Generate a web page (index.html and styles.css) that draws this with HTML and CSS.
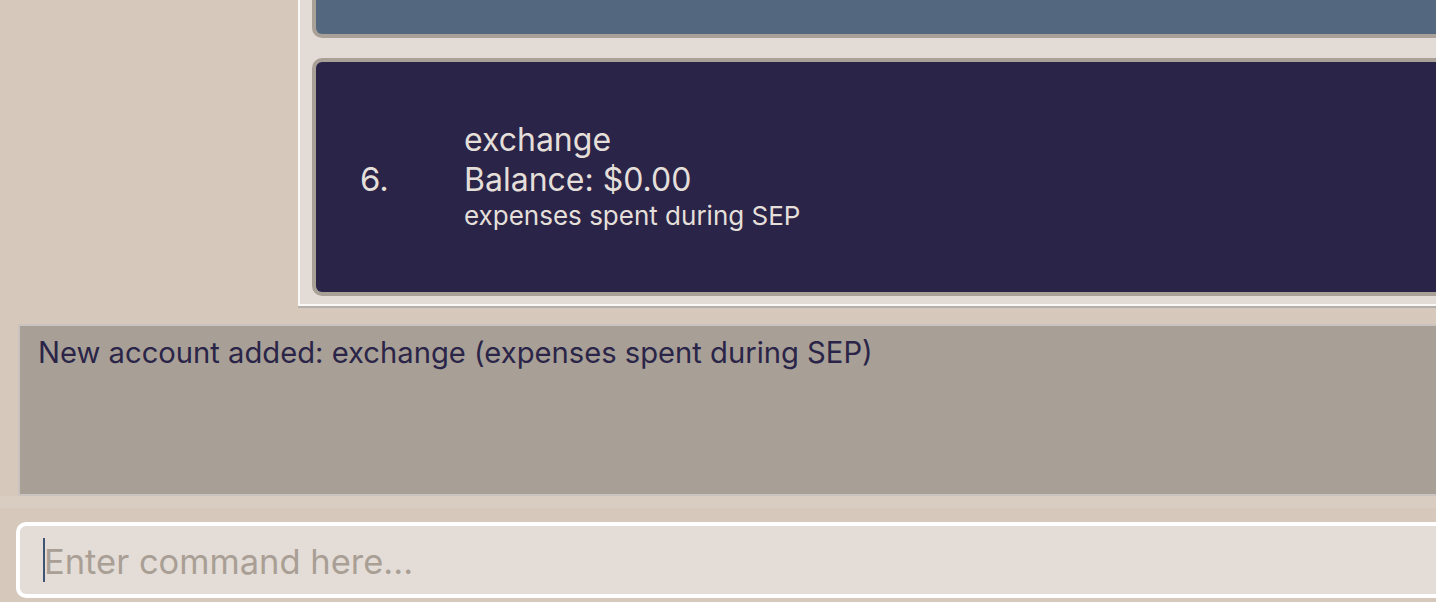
FILE: index.html
```html
<!DOCTYPE html>
<html>
<head>
<meta charset="utf-8">
<link rel="stylesheet" href="styles.css">
</head>
<body>
<div class="app">
  <div class="top-row">
    <div class="sidebar"></div>
    <div class="list-panel">
      <div class="card card-prev"></div>
      <div class="card card-current">
        <div class="card-index">6.</div>
        <div class="card-body">
          <div class="card-name">exchange</div>
          <div class="card-balance">Balance: $0.00</div>
          <div class="card-desc">expenses spent during SEP</div>
        </div>
      </div>
    </div>
  </div>
  <div class="result-section">
    <div class="result-box">New account added: exchange (expenses spent during SEP)</div>
  </div>
  <div class="command-section">
    <div class="command-box">
      <span class="caret"></span>
      <span class="placeholder">Enter command here...</span>
    </div>
  </div>
</div>
</body>
</html>
```

FILE: styles.css
```css
html, body {
  margin: 0;
  padding: 0;
  height: 602px;
  overflow: hidden;
  background: #d6c9bc;
  font-family: Inter, "Noto Sans", sans-serif;
}

.app {
  display: flex;
  flex-direction: column;
  width: 1480px;
  height: 602px;
}

.top-row {
  display: flex;
  align-items: flex-end;
  height: 308px;
  overflow: hidden;
  flex: none;
}

.sidebar {
  width: 298px;
  flex: none;
  align-self: stretch;
}

.list-panel {
  flex: 1;
  display: flex;
  flex-direction: column;
  justify-content: flex-end;
  gap: 20px;
  background: #e3dcd6;
  border-left: 2px solid #fbf9f7;
  border-bottom: 2px solid #fbf9f7;
  box-shadow: 0 2px 0 #b4afab;
  margin-bottom: 2px;
  padding: 0 0 8px 12px;
  height: 500px;
}

.card {
  border: 4px solid #a9a097;
  border-radius: 10px;
  border-right: none;
  border-top-right-radius: 0;
  border-bottom-right-radius: 0;
  flex: none;
}

.card-prev {
  height: 100px;
  background: #53677f;
}

.card-current {
  height: 230px;
  background: #2a2548;
  display: flex;
  align-items: center;
  color: #e5dfda;
}

.card-index {
  width: 104px;
  padding-left: 44px;
  font-size: 33px;
  flex: none;
  margin-top: 4px;
}

.card-body {
  display: flex;
  flex-direction: column;
  margin-top: -2px;
}

.card-name {
  font-size: 32px;
  line-height: 40px;
}

.card-balance {
  font-size: 32px;
  line-height: 40px;
}

.card-desc {
  font-size: 26px;
  line-height: 32px;
}

.result-section {
  padding: 16px 0 0 18px;
  flex: none;
}

.result-box {
  height: 158px;
  background: #a89f96;
  border: 2px solid #c9c4bf;
  border-right: none;
  padding: 10px 0 0 18px;
  color: #2a2548;
  font-size: 29.2px;
  line-height: 34px;
}

.command-section {
  padding: 14px 0 0 16px;
  border-top: 12px solid #d9ccc0;
  flex: none;
}

.command-box {
  height: 68px;
  background: #e4ddd7;
  border: 4px solid #ffffff;
  border-right: none;
  border-radius: 10px 0 0 10px;
  display: flex;
  align-items: center;
  padding-left: 23px;
}

.caret {
  width: 2px;
  height: 44px;
  background: #3d5475;
  flex: none;
}

.placeholder {
  color: #a99f95;
  font-size: 34.5px;
  margin-top: 2px;
  margin-left: -1px;
}
```
